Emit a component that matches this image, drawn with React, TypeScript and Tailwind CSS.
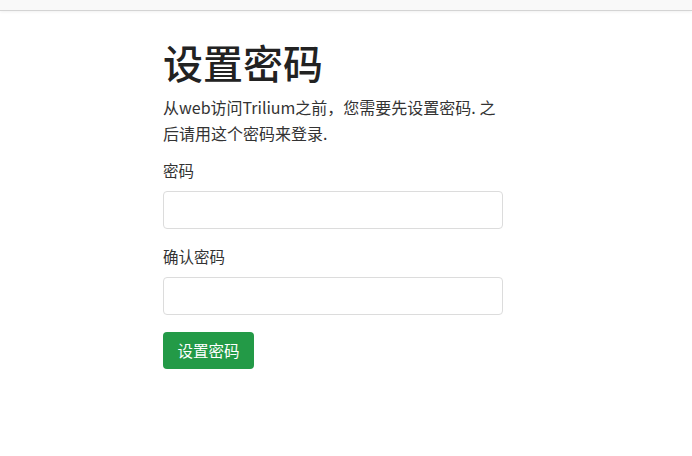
export default function App() {
  return (
    <div className="min-h-[456px] w-full bg-white font-['Noto_Sans_CJK_SC',sans-serif] text-[#333]">
      <div className="h-[11px] border-b border-[#d4d4d4] bg-[#f9f9f9] shadow-[0_1px_3px_rgba(0,0,0,0.06)]" />
      <div className="pl-[163px] pt-[27px]">
        <div className="w-[340px]">
          <h1 className="text-[40px] leading-[48px] font-medium text-[#222]">设置密码</h1>
          <p className="mt-[8px] w-[340px] text-[16px] leading-[26px]">
            从web访问Trilium之前，您需要先设置密码. 之后请用这个密码来登录.
          </p>
          <form className="mt-[12px]">
            <label className="block text-[15.5px] leading-[24px]">密码</label>
            <input
              type="password"
              className="mt-[9px] block h-[38px] w-[340px] rounded-[4px] border border-[#dcdcdc] bg-white"
            />
            <label className="mt-[15px] block text-[15.5px] leading-[24px]">确认密码</label>
            <input
              type="password"
              className="mt-[9px] block h-[38px] w-[340px] rounded-[4px] border border-[#dcdcdc] bg-white"
            />
            <button
              type="button"
              className="mt-[17px] h-[37px] w-[91px] rounded-[4px] bg-[#239a47] text-[15.5px] text-white"
            >
              设置密码
            </button>
          </form>
        </div>
      </div>
    </div>
  );
}
